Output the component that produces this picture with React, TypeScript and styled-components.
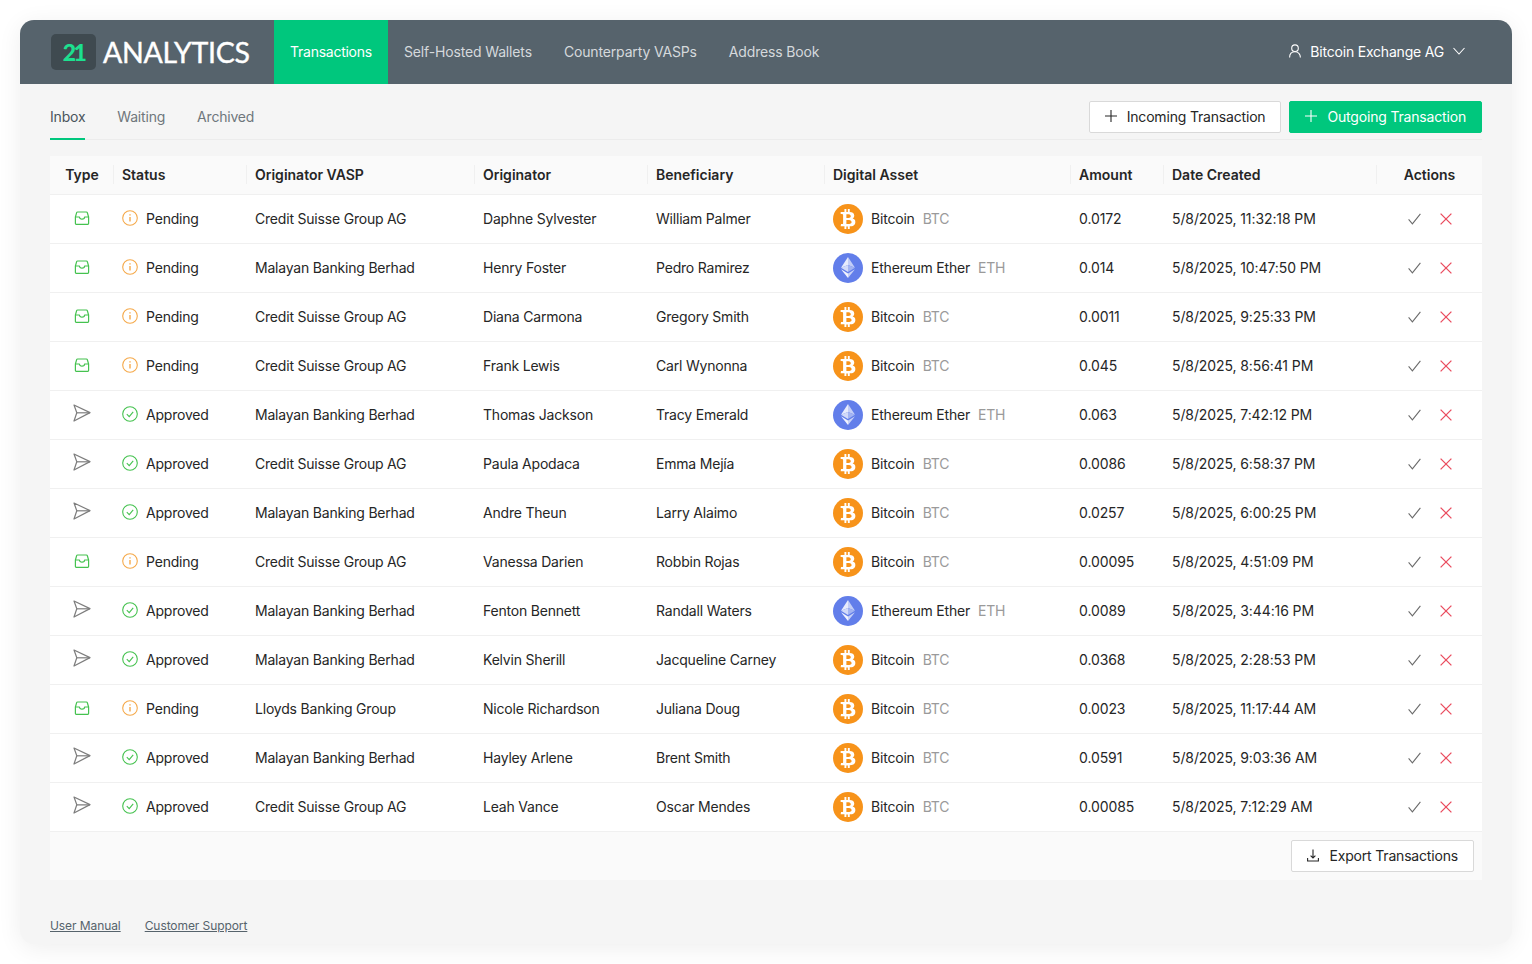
import { type ReactElement } from 'react';
import styled, { createGlobalStyle } from 'styled-components';
import { FaBtc } from 'react-icons/fa';

const GlobalStyle = createGlobalStyle`
  html, body {
    margin: 0;
    background: #fff;
  }
  * {
    box-sizing: border-box;
  }
  body {
    font-family: Inter, "Liberation Sans", sans-serif;
    font-size: 14px;
    letter-spacing: -0.2px;
    color: #262626;
  }
`;

const Page = styled.div`
  width: 1532px;
  height: 964px;
  padding: 20px;
  overflow: hidden;
`;

const Window = styled.div`
  height: 924px;
  background: #f5f5f5;
  border-radius: 14px;
  box-shadow: 0 4px 24px rgba(0, 0, 0, 0.07);
  overflow: hidden;
  display: flex;
  flex-direction: column;
`;

const Header = styled.header`
  flex: none;
  height: 64px;
  background: #56636c;
  display: flex;
  align-items: stretch;
  padding-left: 31px;
  padding-right: 47px;
`;

const Logo = styled.div`
  display: flex;
  align-items: center;
  gap: 7px;
  width: 223px;
`;

const LogoMark = styled.span`
  width: 45px;
  height: 36px;
  border-radius: 5px;
  background: #3f4a50;
  color: #1de08f;
  display: flex;
  align-items: center;
  justify-content: center;
  font-family: Lato, sans-serif;
  font-size: 23px;
  font-weight: 900;
  letter-spacing: -2.5px;
`;

const LogoText = styled.span`
  color: #fff;
  font-family: Lato, sans-serif;
  font-size: 28.5px;
  font-weight: 400;
  letter-spacing: -0.3px;
  -webkit-text-stroke: 0.4px #fff;
`;

const NavItem = styled.a<{ $active?: boolean }>`
  display: flex;
  align-items: center;
  padding: 0 16px 2px;
  font-size: 14px;
  letter-spacing: ${(p) => (p.$active ? '-0.25px' : '-0.15px')};
  color: ${(p) => (p.$active ? '#fff' : '#d5d9dc')};
  background: ${(p) => (p.$active ? '#00c77d' : 'transparent')};
`;

const Account = styled.div`
  margin-left: auto;
  display: flex;
  align-items: center;
  padding-bottom: 2px;
  color: #fff;
  font-size: 14px;
  gap: 9px;
`;

const Main = styled.main`
  flex: 1;
  padding: 0 30px;
  display: flex;
  flex-direction: column;
`;

const TabBar = styled.div`
  flex: none;
  height: 56px;
  display: flex;
  align-items: stretch;
  gap: 32px;
  border-bottom: 1px solid #ececec;
`;

const Tab = styled.a<{ $active?: boolean }>`
  display: flex;
  align-items: center;
  height: 56px;
  padding-top: 11px;
  font-size: 14px;
  color: ${(p) => (p.$active ? '#49545c' : '#6f777c')};
  border-bottom: 2px solid ${(p) => (p.$active ? '#00c77d' : 'transparent')};
`;

const TabActions = styled.div`
  margin-left: auto;
  display: flex;
  gap: 8px;
  padding-top: 17px;
`;

const Button = styled.button<{ $primary?: boolean }>`
  height: 32px;
  padding: 0 15px 2px;
  display: inline-flex;
  align-items: center;
  gap: 10px;
  border-radius: 2px;
  font-family: inherit;
  font-size: 14px;
  letter-spacing: -0.18px;
  color: ${(p) => (p.$primary ? '#fff' : '#262626')};
  background: ${(p) => (p.$primary ? '#00c77d' : '#fff')};
  border: 1px solid ${(p) => (p.$primary ? '#00c77d' : '#d9d9d9')};
`;

const ExportButton = styled(Button)`
  padding-bottom: 0;
`;

const Table = styled.table`
  flex: none;
  margin-top: 16px;
  width: 1432px;
  border-collapse: collapse;
  table-layout: fixed;
  background: #fff;
`;

const HeadCell = styled.th<{ $center?: boolean }>`
  position: relative;
  height: 38px;
  padding: 0 8px;
  font-size: 14px;
  font-weight: 600;
  letter-spacing: 0;
  color: #262626;
  background: #fafafa;
  border-bottom: 1px solid #f0f0f0;
  text-align: ${(p) => (p.$center ? 'center' : 'left')};

  &:not(:last-child)::after {
    content: '';
    position: absolute;
    right: 0;
    top: 9px;
    bottom: 10px;
    width: 1px;
    background: #f0f0f0;
  }
`;

const Row = styled.tr`
  height: 49px;
  border-bottom: 1px solid #f0f0f0;
`;

const Cell = styled.td<{ $center?: boolean; $numeric?: boolean }>`
  padding: 0 8px;
  font-size: 14px;
  color: #262626;
  white-space: nowrap;
  text-align: ${(p) => (p.$center ? 'center' : 'left')};
  letter-spacing: ${(p) => (p.$numeric ? '-0.1px' : 'inherit')};
`;

const TypeIcon = styled.span<{ $lift: number }>`
  display: inline-flex;
  vertical-align: middle;
  margin-bottom: ${(p) => p.$lift}px;
`;

const Status = styled.span`
  display: flex;
  align-items: center;
  gap: 8px;
`;

const StatusIcon = styled.span`
  display: flex;
  margin-top: -2px;
`;

const Asset = styled.span`
  display: flex;
  align-items: center;
`;

const CoinBadge = styled.span<{ $color: string }>`
  width: 30px;
  height: 30px;
  border-radius: 50%;
  background: ${(p) => p.$color};
  color: #fff;
  font-size: 20px;
  display: flex;
  align-items: center;
  justify-content: center;
  margin-right: 8px;
`;

const Ticker = styled.span`
  margin-left: 8px;
  color: #9a9a9a;
`;

const ActionGroup = styled.span`
  display: flex;
  align-items: center;
  justify-content: center;
  gap: 19px;
`;

const TableFooter = styled.div`
  flex: none;
  height: 48px;
  padding: 8px;
  background: #fafafa;
  display: flex;
  justify-content: flex-end;
`;

const Links = styled.div`
  margin-top: 38px;
  display: flex;
  gap: 24px;
  font-size: 12px;
  letter-spacing: -0.08px;
  color: #56636c;

  a {
    text-decoration: underline;
  }
`;

type Coin = 'btc' | 'eth';

type Tx = {
  approved: boolean;
  vasp: string;
  from: string;
  to: string;
  coin: Coin;
  amount: string;
  date: string;
};

const MB = 'Malayan Banking Berhad';
const CS = 'Credit Suisse Group AG';

const rows: Tx[] = [
  { approved: false, vasp: CS, from: 'Daphne Sylvester', to: 'William Palmer', coin: 'btc', amount: '0.0172', date: '5/8/2025, 11:32:18 PM' },
  { approved: false, vasp: MB, from: 'Henry Foster', to: 'Pedro Ramirez', coin: 'eth', amount: '0.014', date: '5/8/2025, 10:47:50 PM' },
  { approved: false, vasp: CS, from: 'Diana Carmona', to: 'Gregory Smith', coin: 'btc', amount: '0.0011', date: '5/8/2025, 9:25:33 PM' },
  { approved: false, vasp: CS, from: 'Frank Lewis', to: 'Carl Wynonna', coin: 'btc', amount: '0.045', date: '5/8/2025, 8:56:41 PM' },
  { approved: true, vasp: MB, from: 'Thomas Jackson', to: 'Tracy Emerald', coin: 'eth', amount: '0.063', date: '5/8/2025, 7:42:12 PM' },
  { approved: true, vasp: CS, from: 'Paula Apodaca', to: 'Emma Mejía', coin: 'btc', amount: '0.0086', date: '5/8/2025, 6:58:37 PM' },
  { approved: true, vasp: MB, from: 'Andre Theun', to: 'Larry Alaimo', coin: 'btc', amount: '0.0257', date: '5/8/2025, 6:00:25 PM' },
  { approved: false, vasp: CS, from: 'Vanessa Darien', to: 'Robbin Rojas', coin: 'btc', amount: '0.00095', date: '5/8/2025, 4:51:09 PM' },
  { approved: true, vasp: MB, from: 'Fenton Bennett', to: 'Randall Waters', coin: 'eth', amount: '0.0089', date: '5/8/2025, 3:44:16 PM' },
  { approved: true, vasp: MB, from: 'Kelvin Sherill', to: 'Jacqueline Carney', coin: 'btc', amount: '0.0368', date: '5/8/2025, 2:28:53 PM' },
  { approved: false, vasp: 'Lloyds Banking Group', from: 'Nicole Richardson', to: 'Juliana Doug', coin: 'btc', amount: '0.0023', date: '5/8/2025, 11:17:44 AM' },
  { approved: true, vasp: MB, from: 'Hayley Arlene', to: 'Brent Smith', coin: 'btc', amount: '0.0591', date: '5/8/2025, 9:03:36 AM' },
  { approved: true, vasp: CS, from: 'Leah Vance', to: 'Oscar Mendes', coin: 'btc', amount: '0.00085', date: '5/8/2025, 7:12:29 AM' },
];

const columnWidths = [64, 133, 228, 173, 177, 246, 93, 213, 105];

function InboxIcon(): ReactElement {
  return (
    <svg width="16" height="15" viewBox="0 0 16 15" fill="none" stroke="#45c24f" strokeWidth="1.2" strokeLinejoin="round">
      <path d="M3.6 1h8.8a1 1 0 0 1 .95.7L14.6 6v6.2a1.2 1.2 0 0 1-1.2 1.2H2.6a1.2 1.2 0 0 1-1.2-1.2V6L2.65 1.7A1 1 0 0 1 3.6 1Z" />
      <path d="M1.4 6H5.4a2.6 2.2 0 0 0 5.2 0H14.6" />
    </svg>
  );
}

function SendIcon(): ReactElement {
  return (
    <svg width="18" height="18" viewBox="0 0 18 18" fill="none" stroke="#7d7d7d" strokeWidth="1.2" strokeLinejoin="round">
      <path d="M1 1 17 8.6 1 17 3.8 8.8Z" />
      <path d="M3.8 8.8H17" />
    </svg>
  );
}

function InfoIcon(): ReactElement {
  return (
    <svg width="16" height="16" viewBox="0 0 16 16" fill="none" stroke="#f5a94a" strokeWidth="1.1">
      <circle cx="8" cy="8" r="7.3" />
      <path d="M8 7v4.4" strokeWidth="1.4" />
      <path d="M8 4.2v1.4" strokeWidth="1.4" />
    </svg>
  );
}

function ApprovedIcon(): ReactElement {
  return (
    <svg width="16" height="16" viewBox="0 0 16 16" fill="none" stroke="#45c24f" strokeWidth="1.1">
      <circle cx="8" cy="8" r="7.3" />
      <path d="M4.8 8.2 7.2 10.6 11.2 5.8" />
    </svg>
  );
}

function PlusIcon(): ReactElement {
  return (
    <svg width="12" height="12" viewBox="0 0 12 12" fill="none" stroke="currentColor" strokeWidth="1.1">
      <path d="M6 0v12M0 6h12" />
    </svg>
  );
}

function UserIcon(): ReactElement {
  return (
    <svg width="12" height="14" viewBox="0 0 12 14" fill="none" stroke="currentColor" strokeWidth="1.1">
      <circle cx="6" cy="4.2" r="3.3" />
      <path d="M.6 13.6C.6 10 2.8 7.8 6 7.8s5.4 2.2 5.4 5.8" />
    </svg>
  );
}

function ChevronIcon(): ReactElement {
  return (
    <svg width="12" height="8" viewBox="0 0 12 8" fill="none" stroke="currentColor" strokeWidth="1.1">
      <path d="M.5 1 6 7 11.5 1" />
    </svg>
  );
}

function CheckIcon(): ReactElement {
  return (
    <svg width="13" height="12" viewBox="0 0 13 12" fill="none" stroke="#6b6b6b" strokeWidth="1.1">
      <path d="M.6 6.4 4.4 10.8 12.4.8" />
    </svg>
  );
}

function CrossIcon(): ReactElement {
  return (
    <svg width="12" height="12" viewBox="0 0 12 12" fill="none" stroke="#ea4d5f" strokeWidth="1.3">
      <path d="M.6.6 11.4 11.4M11.4.6.6 11.4" />
    </svg>
  );
}

function ExportIcon(): ReactElement {
  return (
    <svg width="12" height="13" viewBox="0 0 12 13" fill="none" stroke="#262626" strokeWidth="1.1">
      <path d="M6 .5v8.5M3.6 6.6 6 9 8.4 6.6" />
      <path d="M.6 9v3h10.8V9" />
    </svg>
  );
}

function EthereumMark(): ReactElement {
  return (
    <svg width="14" height="23" viewBox="0 0 16 24">
      <path d="M8 0 0 12.2 8 9Z" fill="#e8ecfc" />
      <path d="M8 0 16 12.2 8 9Z" fill="#c3cef7" />
      <path d="M0 12.2 8 9V17Z" fill="#d2daf9" />
      <path d="M16 12.2 8 9V17Z" fill="#a3b4f2" />
      <path d="M0 14 8 24V18.8Z" fill="#f2f4fd" />
      <path d="M16 14 8 24V18.8Z" fill="#c8d2f7" />
    </svg>
  );
}

function AssetCell({ coin }: { coin: Coin }): ReactElement {
  if (coin === 'eth') {
    return (
      <Asset>
        <CoinBadge $color="#627eea">
          <EthereumMark />
        </CoinBadge>
        Ethereum Ether
        <Ticker>ETH</Ticker>
      </Asset>
    );
  }
  return (
    <Asset>
      <CoinBadge $color="#f7931a">
        <FaBtc />
      </CoinBadge>
      Bitcoin
      <Ticker>BTC</Ticker>
    </Asset>
  );
}

export default function App(): ReactElement {
  return (
    <Page>
      <GlobalStyle />
      <Window>
        <Header>
          <Logo>
            <LogoMark>21</LogoMark>
            <LogoText>ANALYTICS</LogoText>
          </Logo>
          <NavItem $active>Transactions</NavItem>
          <NavItem>Self-Hosted Wallets</NavItem>
          <NavItem>Counterparty VASPs</NavItem>
          <NavItem>Address Book</NavItem>
          <Account>
            <UserIcon />
            Bitcoin Exchange AG
            <ChevronIcon />
          </Account>
        </Header>
        <Main>
          <TabBar>
            <Tab $active>Inbox</Tab>
            <Tab>Waiting</Tab>
            <Tab>Archived</Tab>
            <TabActions>
              <Button>
                <PlusIcon />
                Incoming Transaction
              </Button>
              <Button $primary>
                <PlusIcon />
                Outgoing Transaction
              </Button>
            </TabActions>
          </TabBar>
          <Table>
            <colgroup>
              {columnWidths.map((w, i) => (
                <col key={i} width={w} />
              ))}
            </colgroup>
            <thead>
              <tr>
                <HeadCell $center>Type</HeadCell>
                <HeadCell>Status</HeadCell>
                <HeadCell>Originator VASP</HeadCell>
                <HeadCell>Originator</HeadCell>
                <HeadCell>Beneficiary</HeadCell>
                <HeadCell>Digital Asset</HeadCell>
                <HeadCell>Amount</HeadCell>
                <HeadCell>Date Created</HeadCell>
                <HeadCell $center>Actions</HeadCell>
              </tr>
            </thead>
            <tbody>
              {rows.map((r) => (
                <Row key={r.date}>
                  <Cell $center>
                    <TypeIcon $lift={r.approved ? 4 : 2}>{r.approved ? <SendIcon /> : <InboxIcon />}</TypeIcon>
                  </Cell>
                  <Cell>
                    <Status>
                      <StatusIcon>{r.approved ? <ApprovedIcon /> : <InfoIcon />}</StatusIcon>
                      {r.approved ? 'Approved' : 'Pending'}
                    </Status>
                  </Cell>
                  <Cell>{r.vasp}</Cell>
                  <Cell>{r.from}</Cell>
                  <Cell>{r.to}</Cell>
                  <Cell>
                    <AssetCell coin={r.coin} />
                  </Cell>
                  <Cell $numeric>{r.amount}</Cell>
                  <Cell $numeric>{r.date}</Cell>
                  <Cell>
                    <ActionGroup>
                      <CheckIcon />
                      <CrossIcon />
                    </ActionGroup>
                  </Cell>
                </Row>
              ))}
            </tbody>
          </Table>
          <TableFooter>
            <ExportButton>
              <ExportIcon />
              Export Transactions
            </ExportButton>
          </TableFooter>
          <Links>
            <a>User Manual</a>
            <a>Customer Support</a>
          </Links>
        </Main>
      </Window>
    </Page>
  );
}
